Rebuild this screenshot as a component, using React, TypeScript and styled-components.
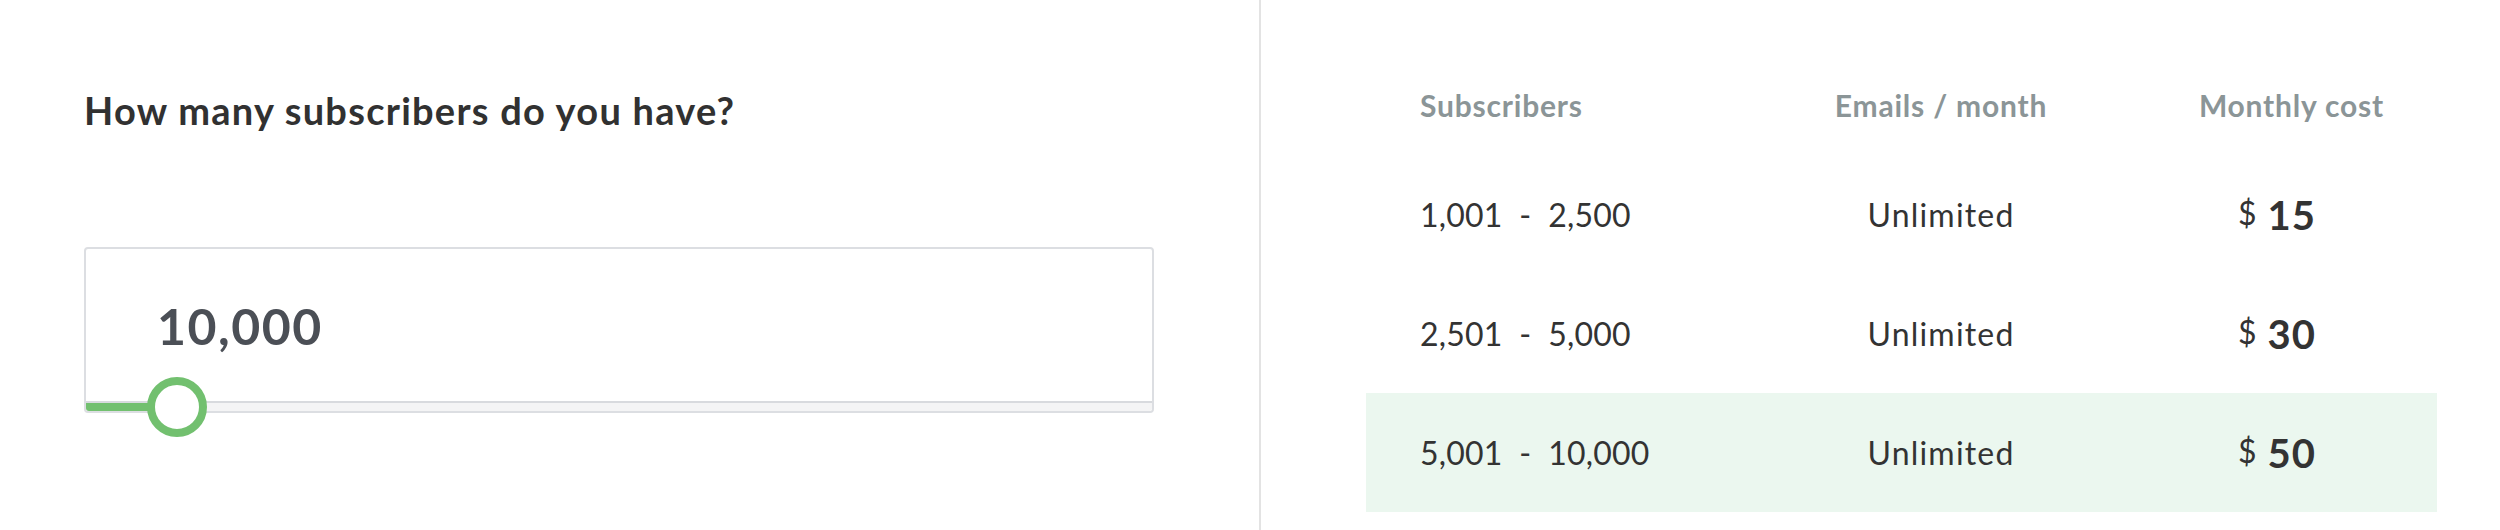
import React from 'react';
import styled, { createGlobalStyle } from 'styled-components';

const GlobalStyle = createGlobalStyle`
  html, body {
    margin: 0;
    padding: 0;
    background: #ffffff;
  }
  body {
    font-family: Lato, "Open Sans", Arial, sans-serif;
    color: #333333;
  }
`;

const Page = styled.div`
  display: flex;
  width: 2500px;
  height: 530px;
`;

const LeftPanel = styled.section`
  width: 1261px;
  flex-shrink: 0;
  box-sizing: border-box;
  padding: 88px 105px 0 84px;
  border-right: 2px solid #e3e3e3;
`;

const Question = styled.h2`
  margin: 0 0 114px;
  font-size: 38px;
  line-height: 45px;
  font-weight: 700;
  letter-spacing: 1.25px;
  color: #313131;
`;

const Card = styled.div`
  position: relative;
  width: 1070px;
  box-sizing: border-box;
  border: 2px solid #dcdee2;
  border-radius: 4px;
  background: #ffffff;
`;

const Value = styled.div`
  padding: 47px 0 45px 71px;
  font-size: 50px;
  line-height: 60px;
  font-weight: 700;
  letter-spacing: 1.5px;
  color: #4b4f56;
`;

const Track = styled.div`
  position: relative;
  height: 10px;
  box-sizing: border-box;
  border-top: 2px solid #d8dade;
  background: #f4f4f5;
  border-radius: 0 0 3px 3px;
`;

const Fill = styled.div`
  height: 100%;
  background: #72c06f;
  border-radius: 0 0 0 3px;
`;

const Knob = styled.div`
  position: absolute;
  top: 50%;
  width: 60px;
  height: 60px;
  box-sizing: border-box;
  border: 8px solid #72c06f;
  border-radius: 50%;
  background: #ffffff;
  transform: translate(-50%, -50%);
`;

const RightPanel = styled.section`
  flex: 1;
  padding: 55px 0 0 105px;
`;

const Table = styled.div`
  width: 1071px;
`;

const Row = styled.div<{ $head?: boolean; $active?: boolean }>`
  display: grid;
  grid-template-columns: 392px 366px 313px;
  align-items: center;
  height: ${({ $head }) => ($head ? '100px' : '119px')};
  background: ${({ $active }) => ($active ? '#ebf7ef' : 'transparent')};
`;

const HeadCell = styled.div<{ $align: 'left' | 'center' | 'right' }>`
  font-size: 30px;
  line-height: 36px;
  font-weight: 700;
  letter-spacing: 0.8px;
  color: #8b9597;
  text-align: ${({ $align }) => $align};
  padding: ${({ $align }) =>
    $align === 'left' ? '0 0 0 54px' : $align === 'right' ? '0 53px 0 0' : '0'};
`;

const Cell = styled.div<{ $align: 'left' | 'center' }>`
  font-size: 32px;
  line-height: 38px;
  font-weight: 400;
  letter-spacing: ${({ $align }) => ($align === 'left' ? '0.2px' : '1.2px')};
  color: #333333;
  text-align: ${({ $align }) => $align};
  padding-left: ${({ $align }) => ($align === 'left' ? '54px' : '0')};
  white-space: pre;
`;

const Price = styled.div`
  display: flex;
  justify-content: center;
  align-items: flex-start;
  gap: 11px;
  padding-right: 7px;
  color: #333333;
`;

const Currency = styled.span`
  font-size: 32px;
  line-height: 32px;
  margin-top: 6px;
`;

const Amount = styled.span`
  font-size: 40px;
  line-height: 48px;
  font-weight: 700;
  letter-spacing: 1px;
`;

const tiers = [
  { range: '1,001  -  2,500', emails: 'Unlimited', cost: 15 },
  { range: '2,501  -  5,000', emails: 'Unlimited', cost: 30 },
  { range: '5,001  -  10,000', emails: 'Unlimited', cost: 50 },
];

const App: React.FC = () => {
  const subscribers = 10000;
  const progress = 8.5; // percent of the slider

  return (
    <Page>
      <GlobalStyle />
      <LeftPanel>
        <Question>How many subscribers do you have?</Question>
        <Card>
          <Value>{subscribers.toLocaleString('en-US')}</Value>
          <Track>
            <Fill style={{ width: `${progress}%` }} />
            <Knob style={{ left: `${progress}%` }} />
          </Track>
        </Card>
      </LeftPanel>

      <RightPanel>
        <Table>
          <Row $head>
            <HeadCell $align="left">Subscribers</HeadCell>
            <HeadCell $align="center">Emails / month</HeadCell>
            <HeadCell $align="right">Monthly cost</HeadCell>
          </Row>
          {tiers.map((tier) => (
            <Row key={tier.range} $active={tier.cost === 50}>
              <Cell $align="left">{tier.range}</Cell>
              <Cell $align="center">{tier.emails}</Cell>
              <Price>
                <Currency>$</Currency>
                <Amount>{tier.cost}</Amount>
              </Price>
            </Row>
          ))}
        </Table>
      </RightPanel>
    </Page>
  );
};

export default App;
